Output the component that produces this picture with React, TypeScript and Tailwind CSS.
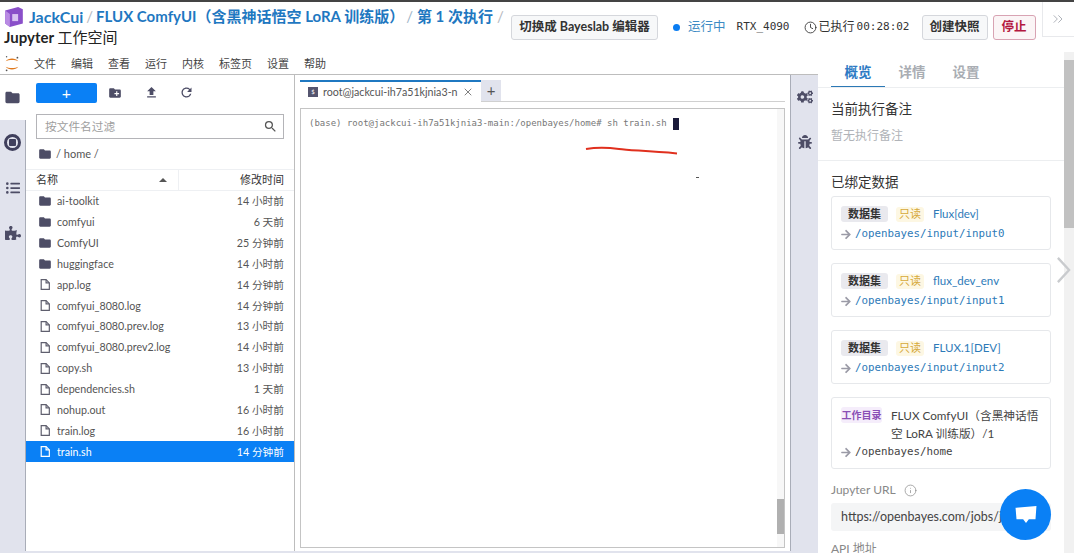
import React from "react"
import { FaArrowRight, FaBug, FaCogs, FaListUl, FaPuzzlePiece } from "react-icons/fa"
import { MdCreateNewFolder, MdFileUpload, MdRefresh, MdSearch } from "react-icons/md"
import { ChevronsRight, Clock, Info, X } from "lucide-react"

const cjk = "font-['Lato','Noto_Sans_CJK_SC',sans-serif]"
const mono = "font-['DejaVu_Sans_Mono','Noto_Sans_CJK_SC',monospace]"

const files = [
    { name: "ai-toolkit", time: "14 小时前", dir: true },
    { name: "comfyui", time: "6 天前", dir: true },
    { name: "ComfyUI", time: "25 分钟前", dir: true },
    { name: "huggingface", time: "14 小时前", dir: true },
    { name: "app.log", time: "14 分钟前" },
    { name: "comfyui_8080.log", time: "14 分钟前" },
    { name: "comfyui_8080.prev.log", time: "13 小时前" },
    { name: "comfyui_8080.prev2.log", time: "14 小时前" },
    { name: "copy.sh", time: "13 小时前" },
    { name: "dependencies.sh", time: "1 天前" },
    { name: "nohup.out", time: "16 小时前" },
    { name: "train.log", time: "16 小时前" },
    { name: "train.sh", time: "14 分钟前", selected: true },
]

const menus = ["文件", "编辑", "查看", "运行", "内核", "标签页", "设置", "帮助"]

const datasets = [
    { name: "Flux[dev]", path: "/openbayes/input/input0" },
    { name: "flux_dev_env", path: "/openbayes/input/input1" },
    { name: "FLUX.1[DEV]", path: "/openbayes/input/input2" },
]

function FolderIcon({ className }: { className?: string }) {
    return (
        <svg viewBox="0 0 24 24" className={className} fill="currentColor">
            <path d="M10 4H4c-1.1 0-2 .9-2 2v12c0 1.1.9 2 2 2h16c1.1 0 2-.9 2-2V8c0-1.1-.9-2-2-2h-8l-2-2z" />
        </svg>
    )
}

function FileIcon({ className }: { className?: string }) {
    return (
        <svg viewBox="0 0 24 24" className={className} fill="none" stroke="currentColor" strokeWidth="2.2">
            <path d="M5 3h9l6 6v12H5z" />
            <path d="M14 3v6h6" />
        </svg>
    )
}

function Header() {
    return (
        <div className="flex h-[50px] shrink-0 items-start bg-white">
            <div className={`w-[506px] shrink-0 pl-[4px] pt-[4px] text-[15px] leading-[21px] font-bold ${cjk}`}>
                <div className="flex items-center whitespace-nowrap text-[#1f78c1]">
                    <svg viewBox="3 2 15 17" className="ml-[1px] mr-[6px] h-[20px] w-[18px]">
                        <path d="M3 5l11-3 4 2v12l-11 3-4-3z" fill="#8a4fc9" />
                        <path d="M3 5l4 3v11l-4-3z" fill="#b98be3" />
                        <rect x="9" y="8" width="5" height="6" fill="#d9c3f2" />
                    </svg>
                    <span className="text-[16px]">JackCui</span>
                    <span className="mx-[3px] font-normal text-[#b5b9c0]">/</span>
                    <span>FLUX ComfyUI（含黑神话悟空 LoRA 训练版）</span>
                    <span className="ml-[2px] mr-[4px] font-normal text-[#9fb6c9]">/</span>
                    <span>第 1 次执行</span>
                    <span className="ml-[4px] font-normal text-[#b5b9c0]">/</span>
                </div>
                <div className="text-[15px] text-[#222]">
                    Jupyter <span className="font-normal">工作空间</span>
                </div>
            </div>
            <div className={`flex h-[50px] items-center text-[13px] text-[#333] ${cjk}`}>
                <button className="ml-[5px] flex h-[25px] w-[147px] items-center justify-center rounded-[3px] border border-[#d5d7dc] bg-[#f7f8f9] text-[12.5px] font-bold">
                    切换成 Bayeslab 编辑器
                </button>
                <span className="ml-[15px] h-[7px] w-[7px] rounded-full bg-[#0a7df2]" />
                <span className="ml-[8px] text-[12.5px] text-[#3d8bc4]">运行中</span>
                <span className={`ml-[11px] text-[11px] ${mono}`}>RTX_4090</span>
                <Clock className="ml-[14px] h-[13px] w-[13px]" strokeWidth={1.6} />
                <span className="ml-[2px] text-[12px]">已执行</span>
                <span className={`ml-[2px] text-[11px] ${mono}`}>00:28:02</span>
                <button className="ml-[12px] flex h-[25px] w-[66px] items-center justify-center rounded-[3px] border border-[#d5d7dc] bg-[#f7f8f9] text-[12.5px] font-bold">
                    创建快照
                </button>
                <button className="ml-[5px] flex h-[25px] w-[43px] items-center justify-center rounded-[3px] border border-[#d8a3b3] bg-[#fbf5f6] text-[12.5px] font-bold text-[#b3173f]">
                    停止
                </button>
            </div>
            <div className="ml-[6px] flex h-[35px] flex-1 items-center justify-center border-b border-l border-[#e8e9ec] text-[#9aa0a8]">
                <ChevronsRight className="h-[16px] w-[16px]" strokeWidth={1.2} />
            </div>
        </div>
    )
}

function Sidebar() {
    return (
        <div className="flex w-[26px] shrink-0 flex-col items-center border-r border-[#a9adb8] bg-[#e1e3ed] text-[#4d4d66]">
            <div className="flex h-[45px] w-[26px] items-center justify-center bg-white">
                <FolderIcon className="h-[17px] w-[17px]" />
            </div>
            <div className="mt-[14px] flex h-[17px] w-[17px] items-center justify-center rounded-full border-[3px] border-[#3f3f5c]">
                <span className="h-[7px] w-[7px] rounded-[1px] bg-[#3f3f5c]" />
            </div>
            <FaListUl className="mt-[30px] h-[14px] w-[14px]" />
            <FaPuzzlePiece className="mt-[30px] h-[16px] w-[16px]" />
        </div>
    )
}

function FileBrowser() {
    return (
        <div className={`flex w-[269px] shrink-0 flex-col border-r border-[#bdbdbd] bg-white ${cjk}`}>
            <div className="flex h-[39px] shrink-0 items-start pl-[10px] pt-[8px] text-[#4d4d66]">
                <div className="flex h-[20px] w-[61px] items-center justify-center rounded-[2px] bg-[#0a80f5] text-[16px] leading-none text-white">
                    +
                </div>
                <MdCreateNewFolder className="ml-[11px] mt-[3px] h-[14px] w-[14px]" />
                <MdFileUpload className="ml-[22px] mt-[2px] h-[15px] w-[15px]" />
                <MdRefresh className="ml-[20px] mt-[2px] h-[15px] w-[15px]" />
            </div>
            <div className="mx-[10px] flex h-[25px] shrink-0 items-center justify-between border border-[#b4b4b8] pl-[8px] pr-[5px] text-[11.7px] text-[#9e9e9e]">
                <span>按文件名过滤</span>
                <MdSearch className="h-[15px] w-[15px] text-[#555]" />
            </div>
            <div className="flex h-[30px] shrink-0 items-center pl-[12px] text-[11px] text-[#555]">
                <FolderIcon className="h-[14px] w-[14px] text-[#4d4d66]" />
                <span className="ml-[4px]">/ home /</span>
            </div>
            <div className="flex h-[22px] shrink-0 items-center border-y border-[#eef0f3] text-[11px] text-[#333]">
                <div className="flex h-full w-[153px] items-center justify-between border-r border-[#eef0f3] pl-[10px] pr-[11px]">
                    <span>名称</span>
                    <span className="h-0 w-0 border-x-[4px] border-b-[4px] border-x-transparent border-b-[#555]" />
                </div>
                <div className="flex-1 pr-[10px] text-right">修改时间</div>
            </div>
            <div className="flex flex-col">
                {files.map((f) => (
                    <div
                        key={f.name}
                        className={`flex h-[20.85px] items-center pl-[12px] pr-[10px] text-[10.7px] ${
                            f.selected ? "bg-[#0a80f5] text-white" : "text-[#555]"
                        }`}
                    >
                        {f.dir ? (
                            <FolderIcon className="h-[14px] w-[14px] text-[#4d4d66]" />
                        ) : (
                            <FileIcon className={`h-[13px] w-[14px] ${f.selected ? "text-white" : "text-[#5f5f6e]"}`} />
                        )}
                        <span className="ml-[5px] flex-1 truncate">{f.name}</span>
                        <span>{f.time}</span>
                    </div>
                ))}
            </div>
        </div>
    )
}

function Terminal() {
    return (
        <div className="relative flex min-w-0 flex-1 flex-col bg-white pl-[5px] pr-[5px] pt-[5px]">
            <div className={`flex h-[22px] shrink-0 items-stretch text-[10.7px] text-[#555] ${cjk}`}>
                <div className="flex w-[181px] items-center border-t-2 border-[#1f78c1] pl-[8px] pr-[7px]">
                    <span className="flex h-[10px] w-[10px] shrink-0 items-center justify-center bg-[#55556f] text-[6px] leading-none text-white">
                        $
                    </span>
                    <span className="ml-[5px] flex-1 overflow-hidden whitespace-nowrap">root@jackcui-ih7a51kjnia3-n</span>
                    <X className="h-[12px] w-[12px]" strokeWidth={1.5} />
                </div>
                <div className="flex w-[20px] items-center justify-center border-b border-[#d0d0d0] bg-[#e1e3ed] text-[15px] text-[#555]">+</div>
                <div className="flex-1 border-b border-[#d0d0d0]" />
            </div>
            <div className="relative mb-[3px] mt-[6px] flex-1 border border-[#c4c4c4] pl-[8px] pt-[8px]">
                <div className={`flex items-center whitespace-nowrap text-[9px] leading-[13px] text-[#777] ${mono}`}>
                    (base) root@jackcui-ih7a51kjnia3-main:/openbayes/home# sh train.sh
                    <span className="ml-[6px] inline-block h-[12px] w-[6px] bg-[#1a1a3a]" />
                </div>
                <div className="absolute right-0 top-0 flex h-full w-[7px] flex-col justify-end bg-[#f7f7f7] pb-[13px]">
                    <div className="h-[35px] bg-[#b0b0b0]" />
                </div>
            </div>
            <svg viewBox="0 0 94 10" className="pointer-events-none absolute left-[290px] top-[71px] h-[10px] w-[94px]">
                <path d="M1 3 C12 1 24 1.5 34 3 S60 4.5 92 7.5" fill="none" stroke="#e0301e" strokeWidth="2" />
            </svg>
            <span className="absolute left-[401px] top-[102px] h-px w-[3px] bg-[#555]" />
        </div>
    )
}

function Arrow() {
    return <FaArrowRight className="mr-[4px] h-[11px] w-[10px] shrink-0 text-[#9a9aa6]" />
}

function DatasetCard({ name, path }: { name: string; path: string }) {
    return (
        <div className="rounded-[3px] border border-[#e6e8eb] px-[9px] pb-[7px] pt-[9px]">
            <div className="flex items-center text-[11px] leading-[16px]">
                <span className="flex h-[16px] w-[47px] items-center justify-center rounded-[3px] bg-[#e9e9ee] font-bold text-[#333]">
                    数据集
                </span>
                <span className="ml-[8px] flex h-[15px] w-[28px] items-center justify-center rounded-[3px] bg-[#fdf7e3] text-[#d6a93a]">
                    只读
                </span>
                <span className="ml-[9px] text-[11.5px] text-[#2d7ab8]">{name}</span>
            </div>
            <div className={`mt-[4px] flex items-center text-[10.8px] leading-[16px] text-[#2d7ab8] ${mono}`}>
                <Arrow />
                {path}
            </div>
        </div>
    )
}

function RightPanel() {
    return (
        <div className={`relative flex min-w-0 flex-1 flex-col overflow-hidden bg-white ${cjk}`}>
            <div className="flex h-[36px] shrink-0 items-stretch border-b border-[#eceef0] pl-[13px] text-[13.5px] font-bold text-[#a9adb3]">
                <span className="flex w-[54px] items-center justify-center border-b border-[#2b78b5] pt-[6px] text-[#2d7ac4]">概览</span>
                <span className="flex w-[54px] items-center justify-center pt-[6px]">详情</span>
                <span className="flex w-[54px] items-center justify-center pt-[6px]">设置</span>
            </div>
            <div className="flex h-[73px] shrink-0 flex-col border-b border-[#eceef0] pl-[13px] pt-[12px]">
                <span className="text-[13.5px] leading-[18px] text-[#333]">当前执行备注</span>
                <span className="mt-[10px] text-[12px] leading-[16px] text-[#b0b3b8]">暂无执行备注</span>
            </div>
            <div className="flex flex-col px-[13px] pt-[12px]">
                <span className="text-[13.5px] leading-[18px] text-[#333]">已绑定数据</span>
                <div className="mt-[5px] flex flex-col gap-[13px]">
                    {datasets.map((d) => (
                        <DatasetCard key={d.path} name={d.name} path={d.path} />
                    ))}
                    <div className="rounded-[3px] border border-[#e6e8eb] px-[9px] pb-[8px] pt-[8px]">
                        <div className="flex items-start">
                            <span className="mt-[1px] flex h-[16px] w-[41px] shrink-0 items-center justify-center whitespace-nowrap rounded-[3px] bg-[#f5edfb] text-[10px] font-bold text-[#8a4fb5]">
                                工作目录
                            </span>
                            <span className="ml-[9px] text-[11.7px] leading-[18px] text-[#444]">
                                FLUX ComfyUI（含黑神话悟空 LoRA 训练版）/1
                            </span>
                        </div>
                        <div className={`mt-[2px] flex items-center text-[10.8px] leading-[16px] text-[#444] ${mono}`}>
                            <Arrow />
                            /openbayes/home
                        </div>
                    </div>
                </div>
                <div className="mt-[12px] flex items-center text-[12px] leading-[18px] text-[#888]">
                    Jupyter URL
                    <Info className="ml-[8px] h-[13px] w-[13px]" strokeWidth={1.3} />
                </div>
                <div className="mt-[4px] flex h-[28px] items-center overflow-hidden rounded-[3px] bg-[#f4f5f6] pl-[10px] text-[12.5px] whitespace-nowrap text-[#444]">
                    https://openbayes.com/jobs/jackcui
                </div>
                <div className="mt-[9px] text-[12px] leading-[18px] text-[#888]">API 地址</div>
            </div>
        </div>
    )
}

export default function App() {
    return (
        <div className="relative flex h-[553px] w-[1074px] flex-col overflow-hidden bg-white">
            <div className="h-[2px] shrink-0 bg-[#444]" />
            <Header />
            <div className="flex min-h-0 flex-1">
                <div className="flex w-[818px] shrink-0 flex-col">
                    <div className={`flex h-[23px] shrink-0 items-center border-b border-[#bdbdbd] pt-[2px] text-[11px] text-[#444] ${cjk}`}>
                        <svg viewBox="0 0 20 20" className="ml-[3px] h-[18px] w-[18px]">
                            <path d="M3 7 C6 3 14 3 17 7 C14 5 6 5 3 7z" fill="#e0781c" />
                            <path d="M3 13 C6 17 14 17 17 13 C14 15 6 15 3 13z" fill="#e0781c" />
                            <circle cx="16" cy="3" r="1" fill="#555" />
                            <circle cx="4" cy="2" r="0.8" fill="#555" />
                            <circle cx="4" cy="17" r="1" fill="#555" />
                        </svg>
                        <div className="ml-[13px] flex gap-[15px]">
                            {menus.map((m) => (
                                <span key={m}>{m}</span>
                            ))}
                        </div>
                    </div>
                    <div className="flex min-h-0 flex-1">
                        <Sidebar />
                        <FileBrowser />
                        <Terminal />
                        <div className="flex w-[28px] shrink-0 flex-col items-center border-l border-[#a9adb8] bg-[#e1e3ed] pt-[14px] text-[#4d4d66]">
                            <FaCogs className="h-[16px] w-[16px]" />
                            <FaBug className="mt-[30px] h-[14px] w-[14px]" />
                        </div>
                    </div>
                    <div className="h-[2px] shrink-0 bg-[#e1e3ed]" />
                </div>
                <RightPanel />
                <div className="flex w-[10px] shrink-0 flex-col bg-[#f1f1f1]">
                    <div className="mt-[8px] h-[168px] bg-[#c1c1c1]" />
                </div>
            </div>
            <svg viewBox="0 0 18 30" className="absolute left-[1055px] top-[256px] h-[28px] w-[17px]">
                <path d="M3 2 L15 15 L3 28" fill="none" stroke="#c9cbce" strokeWidth="2.5" />
            </svg>
            <div className="absolute left-[1000px] top-[489px] flex h-[51px] w-[51px] items-center justify-center rounded-full bg-[#0a80f5]">
                <svg viewBox="0 0 24 20" className="h-[19px] w-[24px]">
                    <path d="M1 3 L23 1 L22 15 L15 15 L12 19 L9 15 L2 15z" fill="white" />
                </svg>
            </div>
        </div>
    )
}
